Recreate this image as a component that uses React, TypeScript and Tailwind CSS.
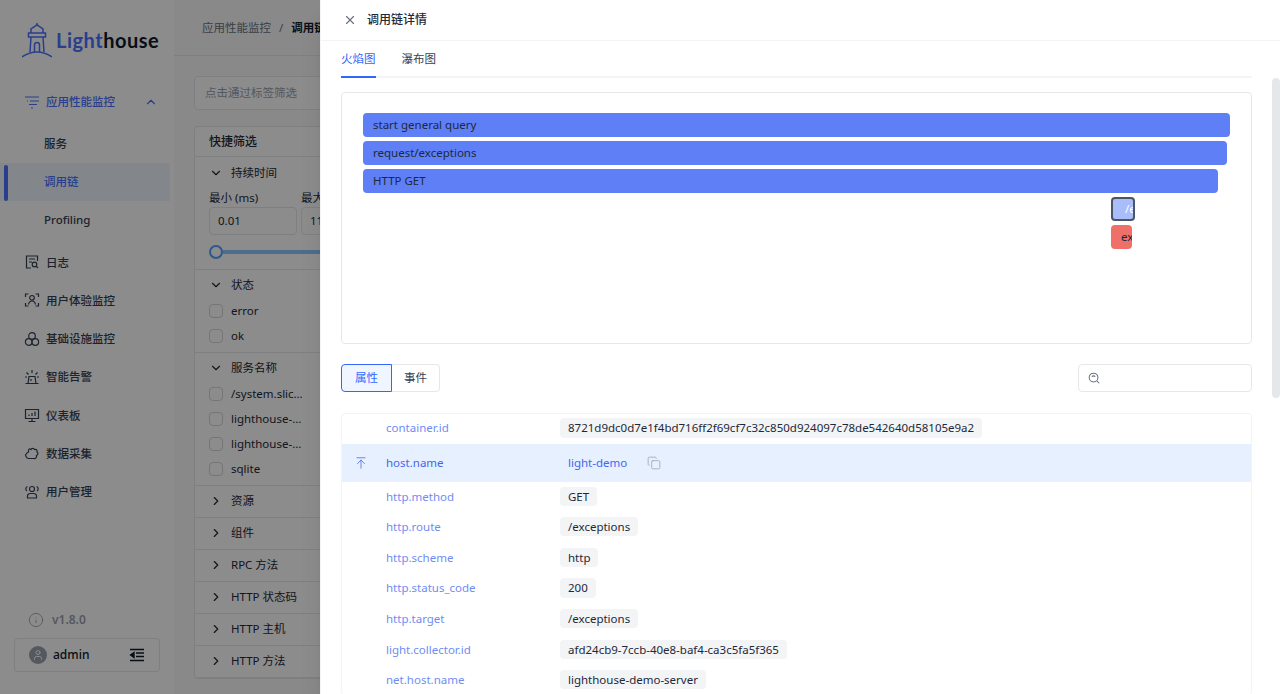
import { ChevronDown, ChevronRight, ChevronUp, Copy, Info, User, X, ArrowUpToLine } from "lucide-react";
import type { ReactNode } from "react";

const FONT = "font-['Noto_Sans','Noto_Sans_CJK_SC',sans-serif]";

function Glyph({ children }: { children: ReactNode }) {
  return (
    <svg viewBox="0 0 16 16" className="size-4 shrink-0" fill="none" stroke="currentColor" strokeWidth="1.2">
      {children}
    </svg>
  );
}

function Lighthouse() {
  return (
    <svg viewBox="0 0 30 36" className="h-9 w-7.5 shrink-0 text-[#4c72ff]" fill="none" stroke="currentColor" strokeWidth="1.5">
      <path d="M9 11V7l6-4 6 4v4" />
      <path d="M15 1v2" />
      <path d="M6.500 11h17v4h-17z" />
      <path d="M9 15l-1 15M21 15l1 15" />
      <path d="M12.500 30v-7a2.500 2.500 0 0 1 5 0v7" />
      <path d="M0 35c5-3.500 10-5 15-5s10 1.500 15 5" />
    </svg>
  );
}

function SearchIcon() {
  return (
    <svg viewBox="0 0 16 16" className="size-3.5 text-gray-500" fill="none" stroke="currentColor" strokeWidth="1.2">
      <circle cx="7.500" cy="7.500" r="5" />
      <path d="M5.500 6.500a3 3 0 0 1 4 0M11.500 11.500l2.500 2.500" />
    </svg>
  );
}

function CollapseIcon() {
  return (
    <svg viewBox="0 0 16 16" className="size-4" fill="none" stroke="currentColor" strokeWidth="1.3">
      <path d="M1 2.500h14M7 6h8M7 9.500h8M1 13.500h14" />
      <path d="M5 5.500v5L1.500 8z" fill="currentColor" />
    </svg>
  );
}

const navItems = [
  {
    label: "日志",
    icon: (
      <Glyph>
        <path d="M13.500 7V2h-11v12H7" />
        <path d="M5 5h6M5 8h3" />
        <circle cx="10.500" cy="10.500" r="2.300" />
        <path d="M12.200 12.200L14 14" />
      </Glyph>
    ),
  },
  {
    label: "用户体验监控",
    icon: (
      <Glyph>
        <path d="M1.500 5V2h3M11.500 2h3v3M1.500 11v3h3M11.500 14h3v-3" />
        <circle cx="8" cy="5.800" r="2.300" />
        <path d="M4.500 12.500c.5-2.500 2-3.500 3.500-3.500s3 1 3.500 3.500" />
      </Glyph>
    ),
  },
  {
    label: "基础设施监控",
    icon: (
      <Glyph>
        <circle cx="8" cy="5" r="3.300" />
        <circle cx="4.700" cy="11" r="3.300" />
        <circle cx="11.300" cy="11" r="3.300" />
      </Glyph>
    ),
  },
  {
    label: "智能告警",
    icon: (
      <Glyph>
        <path d="M1.500 14.500h13M4 14.500l1-7h6l1 7" />
        <path d="M8 1v3M2.500 3.500l2 2M13.500 3.500l-2 2M1 8h2M13 8h2M7 10v2" />
      </Glyph>
    ),
  },
  {
    label: "仪表板",
    icon: (
      <Glyph>
        <path d="M1.500 2.500h13v9h-13zM8 11.500v3M4.500 14.500h7" />
        <path d="M5 9V7.500M8 9V6M11 9V4.500" />
      </Glyph>
    ),
  },
  {
    label: "数据采集",
    icon: (
      <Glyph>
        <path d="M4.500 6V4.500C4.500 3 6 2.500 7 3.500c.5-1.500 3-1.500 3.500 0 1.500-.5 3 .5 2.500 2.500 1.500 1 1 3-.5 3.500.5 2-1 3.500-2.500 3H5c-2 0-3-1-3.500-3.500C2 8 3 6.500 4.500 6z" />
      </Glyph>
    ),
  },
  {
    label: "用户管理",
    icon: (
      <Glyph>
        <circle cx="8" cy="5" r="2.500" />
        <path d="M3.500 14v-2c0-1.500 1.500-2.500 3-2.500h3c1.500 0 3 1 3 2.500v2z" />
        <path d="M3.500 2.500a2.500 2.500 0 0 0-.5 4.500M12.500 2.500a2.500 2.500 0 0 1 .5 4.500" />
      </Glyph>
    ),
  },
];

function Sidebar() {
  return (
    <aside className="flex w-[174px] shrink-0 flex-col bg-white pb-5.5">
      <div className="flex h-20 items-center gap-1 pl-5.5">
        <Lighthouse />
        <span className="font-['Lato',sans-serif] text-xl font-bold tracking-wide">
          <span className="text-[#4c72ff]">Light</span>
          <span className="text-gray-900">house</span>
        </span>
      </div>
      <nav className="flex flex-1 flex-col pt-0.75 font-medium text-gray-700">
        <div className="flex h-9.5 items-center gap-1.5 pl-6 pr-4 text-[#4c72ff]">
          <Glyph>
            <path d="M1 3h14M3 7h1M6 7h9M5 10.500h8M7 14h2" />
          </Glyph>
          <span className="flex-1">应用性能监控</span>
          <ChevronUp className="size-3.5" />
        </div>
        <div className="py-1">
          <div className="flex h-9.5 items-center pl-11">服务</div>
          <div className="relative mr-1 flex h-9.5 items-center bg-blue-50 pl-11 text-[#4c72ff]">
            <span className="absolute left-1 top-0.5 h-9 w-1 rounded-full bg-[#4c72ff]" />
            调用链
          </div>
          <div className="flex h-9.5 items-center pl-11">Profiling</div>
        </div>
        <div className="grid h-67 grid-rows-7">
          {navItems.map((item) => (
            <div key={item.label} className="flex items-center gap-1.5 pl-6">
              {item.icon}
              {item.label}
            </div>
          ))}
        </div>
      </nav>
      <div className="flex items-center gap-2 pb-2.5 pl-7 text-xs font-semibold text-gray-400">
        <Info className="size-4" strokeWidth={1.3} />
        v1.8.0
      </div>
      <div className="mx-3.5 flex h-8.5 items-center gap-1.5 rounded border border-gray-200 px-3.5 text-xs font-medium text-gray-900">
        <span className="flex size-4.5 items-center justify-center rounded-full bg-gray-400 text-white">
          <User className="size-3" />
        </span>
        <span className="flex-1">admin</span>
        <CollapseIcon />
      </div>
    </aside>
  );
}

function CheckRow({ label }: { label: string }) {
  return (
    <div className="flex h-6 items-center gap-2 pl-3.5">
      <span className="size-3.5 rounded-sm border border-gray-300 bg-white" />
      {label}
    </div>
  );
}

const collapsed = ["资源", "组件", "RPC 方法", "HTTP 状态码", "HTTP 主机", "HTTP 方法"];

function GroupHead({ label }: { label: string }) {
  return (
    <div className="mt-px flex h-7 items-center gap-2 pl-3.5">
      <ChevronDown className="size-3.5" />
      {label}
    </div>
  );
}

function FilterCard() {
  return (
    <div className="w-72 rounded border border-gray-200 bg-white text-gray-800">
      <div className="flex h-7.5 items-center border-b border-gray-200 px-3.5 text-xs font-medium">快捷筛选</div>
      <div className="border-b border-gray-200 pb-2.5">
        <div className="flex h-8 items-center gap-2 pl-3.5">
          <ChevronDown className="size-3.5" />
          持续时间
        </div>
        <div className="flex gap-1 pl-3.5">
          <div className="w-22">
            最小 (ms)
            <div className="mt-px rounded-sm border border-gray-200 px-2 py-1">0.01</div>
          </div>
          <div className="w-22">
            最大 (ms)
            <div className="mt-px rounded-sm border border-gray-200 px-2 py-1">113</div>
          </div>
        </div>
        <div className="mt-2.5 flex items-center pl-3.5">
          <span className="size-3.5 rounded-full border-2 border-blue-400 bg-white" />
          <span className="h-1 flex-1 bg-blue-300" />
        </div>
      </div>
      <div className="border-b border-gray-200 pb-1">
        <GroupHead label="状态" />
        <div className="flex flex-col gap-px">
          <CheckRow label="error" />
          <CheckRow label="ok" />
        </div>
      </div>
      <div className="border-b border-gray-200 pb-1">
        <GroupHead label="服务名称" />
        <div className="flex flex-col gap-px">
          <CheckRow label="/system.slic…" />
          <CheckRow label="lighthouse-…" />
          <CheckRow label="lighthouse-…" />
          <CheckRow label="sqlite" />
        </div>
      </div>
      {collapsed.map((label) => (
        <div key={label} className="flex h-8 items-center gap-2 border-b border-gray-200 pl-3.5">
          <ChevronRight className="size-3.5" />
          {label}
        </div>
      ))}
    </div>
  );
}

function Background() {
  return (
    <div className="flex h-full">
      <Sidebar />
      <div className="flex-1 bg-gray-50">
        <div className="flex h-14 items-center gap-2 border-b border-gray-200 px-7 text-gray-500">
          应用性能监控 <span>/</span> <span className="font-semibold text-gray-900">调用链</span>
        </div>
        <div className="space-y-4 px-5 pt-5">
          <div className="flex h-8.5 items-center rounded border border-gray-200 bg-white px-2.5 text-gray-400">
            点击通过标签筛选
          </div>
          <FilterCard />
        </div>
      </div>
    </div>
  );
}

const spans = [
  { label: "start general query", left: 21, top: 20, width: 867, cls: "bg-[#5e7ff5] text-gray-800 pl-2.5" },
  { label: "request/exceptions", left: 21, top: 48, width: 864, cls: "bg-[#5e7ff5] text-gray-800 pl-2.5" },
  { label: "HTTP GET", left: 21, top: 76, width: 855, cls: "bg-[#5e7ff5] text-gray-800 pl-2.5" },
  { label: "/exceptions", left: 769, top: 104, width: 24, cls: "bg-[#a9bdfa] text-white pl-3 border-2 border-gray-600" },
  { label: "exception", left: 769, top: 132, width: 21, cls: "bg-[#ef6f69] text-gray-800 pl-2.5" },
];

function FlameGraph() {
  return (
    <div className="relative h-63 rounded border border-gray-200 bg-white">
      {spans.map((s) => (
        <div
          key={s.label}
          className={`absolute flex h-6 items-center overflow-hidden whitespace-nowrap rounded ${s.cls}`}
          style={{ left: s.left, top: s.top, width: s.width }}
        >
          {s.label}
        </div>
      ))}
    </div>
  );
}

const attrs = [
  { k: "http.method", v: "GET" },
  { k: "http.route", v: "/exceptions" },
  { k: "http.scheme", v: "http" },
  { k: "http.status_code", v: "200" },
  { k: "http.target", v: "/exceptions" },
  { k: "light.collector.id", v: "afd24cb9-7ccb-40e8-baf4-ca3c5fa5f365" },
  { k: "net.host.name", v: "lighthouse-demo-server" },
];

function AttrRow({ k, v }: { k: string; v: string }) {
  return (
    <div className="flex items-center pl-11">
      <span className="w-43.5 text-[#6f8cf5]">{k}</span>
      <span className="rounded bg-gray-100 px-2 py-px text-gray-800">{v}</span>
    </div>
  );
}

function Drawer() {
  return (
    <div className="absolute inset-y-0 right-0 flex w-240 flex-col border-l border-gray-100 bg-white shadow-xl">
      <div className="flex h-10.25 shrink-0 items-center gap-2.5 border-b border-gray-100 px-5.5 text-xs font-medium text-gray-800">
        <X className="size-3.5 text-gray-500" />
        调用链详情
      </div>
      <div className="relative flex-1 overflow-hidden pl-5 pr-7">
        <span className="absolute right-0 top-9.25 h-80 w-2 rounded-full bg-gray-200" />
        <div className="flex h-9.25 gap-6.5 border-b-2 border-gray-100 text-gray-700">
          <div className="-mb-0.5 flex items-center border-b-2 border-[#3366ff] text-[#3366ff]">火焰图</div>
          <div className="flex items-center">瀑布图</div>
        </div>
        <div className="pt-3.5">
          <FlameGraph />
        </div>
        <div className="flex items-center justify-between py-5">
          <div className="flex">
            <span className="flex h-7 items-center rounded-l border border-[#3366ff] bg-blue-50 px-3.25 text-[#3366ff]">属性</span>
            <span className="flex h-7 items-center rounded-r border border-l-0 border-gray-200 px-3 text-gray-700">事件</span>
          </div>
          <div className="flex h-7 w-43.5 items-center rounded border border-gray-200 px-2">
            <SearchIcon />
          </div>
        </div>
        <div className="mt-px rounded border border-gray-100">
          <div className="flex h-7.5 items-center pb-0.5 pl-11">
            <span className="w-43.5 text-[#6f8cf5]">container.id</span>
            <span className="rounded bg-gray-100 px-2 py-px text-gray-800">8721d9dc0d7e1f4bd716ff2f69cf7c32c850d924097c78de542640d58105e9a2</span>
          </div>
          <div className="flex h-9.5 items-center bg-blue-100/70 pl-3 text-[#4466ee]">
            <ArrowUpToLine className="mr-4.5 size-3.5" strokeWidth={1.3} />
            <span className="w-43.5">host.name</span>
            <span className="px-2">light-demo</span>
            <Copy className="ml-3 size-3.5 text-gray-400" strokeWidth={1.3} />
          </div>
          <div className="-mt-px grid h-53.5 grid-rows-7">
            {attrs.map((a) => (
              <AttrRow key={a.k} k={a.k} v={a.v} />
            ))}
          </div>
        </div>
      </div>
    </div>
  );
}

export default function App() {
  return (
    <div className={`relative h-screen overflow-hidden text-[11.5px] ${FONT}`}>
      <Background />
      <div className="absolute inset-0 bg-black/45" />
      <Drawer />
    </div>
  );
}
